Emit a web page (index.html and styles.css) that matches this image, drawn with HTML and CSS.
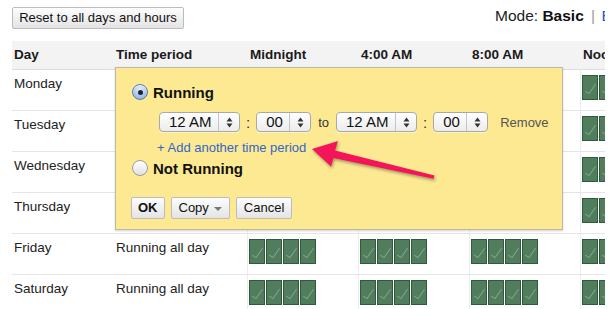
FILE: index.html
```html
<!DOCTYPE html>
<html>
<head>
<meta charset="utf-8">
<link rel="stylesheet" href="styles.css">
</head>
<body>
<div class="page">
  <div class="topbar">
    <button class="btn reset">Reset to all days and hours</button>
    <div class="mode">Mode: <b>Basic</b> <span class="sep">|</span> <a class="modelink">Bid adjustment</a></div>
  </div>

  <div class="sched">
    <div class="row head">
      <div class="c">Day</div><div class="c">Time period</div>
      <div class="c">Midnight</div><div class="c">4:00 AM</div><div class="c">8:00 AM</div><div class="c">Noon</div>
    </div>
    <div class="row">
      <div class="c">Monday</div><div class="c"></div>
      <div class="h"><i></i><i></i><i></i><i></i></div><div class="h"><i></i><i></i><i></i><i></i></div><div class="h"><i></i><i></i><i></i><i></i></div><div class="h"><i></i><i></i><i></i><i></i></div>
    </div>
    <div class="row">
      <div class="c">Tuesday</div><div class="c"></div>
      <div class="h"><i></i><i></i><i></i><i></i></div><div class="h"><i></i><i></i><i></i><i></i></div><div class="h"><i></i><i></i><i></i><i></i></div><div class="h"><i></i><i></i><i></i><i></i></div>
    </div>
    <div class="row">
      <div class="c">Wednesday</div><div class="c"></div>
      <div class="h"><i></i><i></i><i></i><i></i></div><div class="h"><i></i><i></i><i></i><i></i></div><div class="h"><i></i><i></i><i></i><i></i></div><div class="h"><i></i><i></i><i></i><i></i></div>
    </div>
    <div class="row">
      <div class="c">Thursday</div><div class="c"></div>
      <div class="h"><i></i><i></i><i></i><i></i></div><div class="h"><i></i><i></i><i></i><i></i></div><div class="h"><i></i><i></i><i></i><i></i></div><div class="h"><i></i><i></i><i></i><i></i></div>
    </div>
    <div class="row">
      <div class="c">Friday</div><div class="c">Running all day</div>
      <div class="h"><i></i><i></i><i></i><i></i></div><div class="h"><i></i><i></i><i></i><i></i></div><div class="h"><i></i><i></i><i></i><i></i></div><div class="h"><i></i><i></i><i></i><i></i></div>
    </div>
    <div class="row">
      <div class="c">Saturday</div><div class="c">Running all day</div>
      <div class="h"><i></i><i></i><i></i><i></i></div><div class="h"><i></i><i></i><i></i><i></i></div><div class="h"><i></i><i></i><i></i><i></i></div><div class="h"><i></i><i></i><i></i><i></i></div>
    </div>
  </div>

  <div class="popup">
    <div class="opt"><span class="radio on"></span><span class="optlabel">Running</span></div>
    <div class="times">
      <div class="sel sel-h"><span class="val">12 AM</span><span class="arr"><svg width="7" height="11" viewBox="0 0 7 11"><path d="M0.5 4.5 L3.5 0.5 L6.5 4.5 Z M0.5 6.5 L3.5 10.5 L6.5 6.5 Z" fill="#333"/></svg></span></div>
      <span class="colon">:</span>
      <div class="sel sel-m"><span class="val">00</span><span class="arr"><svg width="7" height="11" viewBox="0 0 7 11"><path d="M0.5 4.5 L3.5 0.5 L6.5 4.5 Z M0.5 6.5 L3.5 10.5 L6.5 6.5 Z" fill="#333"/></svg></span></div>
      <span class="to">to</span>
      <div class="sel sel-h"><span class="val">12 AM</span><span class="arr"><svg width="7" height="11" viewBox="0 0 7 11"><path d="M0.5 4.5 L3.5 0.5 L6.5 4.5 Z M0.5 6.5 L3.5 10.5 L6.5 6.5 Z" fill="#333"/></svg></span></div>
      <span class="colon">:</span>
      <div class="sel sel-m"><span class="val">00</span><span class="arr"><svg width="7" height="11" viewBox="0 0 7 11"><path d="M0.5 4.5 L3.5 0.5 L6.5 4.5 Z M0.5 6.5 L3.5 10.5 L6.5 6.5 Z" fill="#333"/></svg></span></div>
      <span class="remove">Remove</span>
    </div>
    <a class="addlink">+ Add another time period</a>
    <div class="opt opt2"><span class="radio"></span><span class="optlabel">Not Running</span></div>
    <div class="actions">
      <button class="btn pbtn ok">OK</button>
      <button class="btn pbtn">Copy <span class="tri"></span></button>
      <button class="btn pbtn">Cancel</button>
    </div>
  </div>

  <svg class="arrow" width="616" height="309" viewBox="0 0 616 309">
    <polygon points="312,149 338,141 335,150.5 434.5,175.5 433.5,178.8 333.5,158 331,166.5" fill="#f5145a"/>
  </svg>
</div>
</body>
</html>
```

FILE: styles.css
```css
html, body {
  margin: 0;
  padding: 0;
  overflow: hidden;
  background: #fff;
}
body {
  font-family: "Liberation Sans", Arial, Helvetica, sans-serif;
  font-size: 13px;
  color: #222;
}
.page {
  position: relative;
  width: 605px;
  height: 309px;
  overflow: hidden;
}
.topbar {
  display: flex;
  align-items: flex-start;
  padding: 7px 0 0 12px;
}
.btn {
  font-family: "Liberation Sans", Arial, Helvetica, sans-serif;
  font-size: 13px;
  color: #111;
  background: linear-gradient(#fdfdfd, #e4e4e4);
  border: 1px solid #bcbcbc;
  border-radius: 2px;
  height: 22px;
  line-height: 20px;
  padding: 0 6px;
  margin: 0;
  box-sizing: border-box;
  flex-shrink: 0;
}
.reset {
  width: 172px;
  padding: 0;
}
.mode {
  margin-left: 311px;
  font-size: 15.5px;
  line-height: 18px;
  white-space: nowrap;
  flex-shrink: 0;
  color: #222;
}
.mode b { color: #111; }
.sep { color: #999; margin: 0 2px 0 3px; }
.modelink { color: #2255cc; }

.sched {
  margin: 12px 0 0 12px;
  width: 679px;
}
.row {
  display: grid;
  grid-template-columns: 102px 133px 111px 111px 111px 111px;
  height: 40px;
  border-bottom: 1px solid #e5e5e5;
}
.row.head {
  height: 28px;
  background: #f3f3f3;
  border-bottom: 1px solid #dedede;
  font-weight: bold;
  font-size: 13.5px;
  color: #1a1a1a;
}
.row.head .c {
  display: flex;
  align-items: center;
  padding: 0 0 0 2px;
}
.row.head .c:nth-child(n+3) { padding-left: 3px; }
.c {
  padding: 6px 0 0 2px;
  line-height: 16px;
  font-size: 13.5px;
  white-space: nowrap;
}
.h {
  border-left: 1px solid #ececec;
  padding: 5px 0 0 1px;
  display: flex;
  align-items: flex-start;
}
.h i {
  position: relative;
  display: block;
  width: 16px;
  height: 25px;
  box-sizing: border-box;
  margin-right: 1px;
  background: #507e5c;
  border: 1px solid #2f5a3b;
}
.h i::after {
  content: "";
  position: absolute;
  left: 5px;
  top: 6px;
  width: 4px;
  height: 11px;
  border-right: 1px solid rgba(190, 215, 195, 0.45);
  border-bottom: 1px solid rgba(190, 215, 195, 0.45);
  transform: rotate(35deg);
}

.popup {
  position: absolute;
  left: 115px;
  top: 67px;
  width: 448px;
  height: 163px;
  box-sizing: border-box;
  background: #fde992;
  border: 1px solid #bdb9a6;
  box-shadow: 0 1px 2px rgba(0, 0, 0, 0.18);
  padding: 15px 0 0 15px;
}
.opt {
  display: flex;
  align-items: center;
  height: 18px;
  margin-left: 1px;
}
.opt2 { margin-top: 4px; }
.radio {
  position: relative;
  width: 16px;
  height: 16px;
  box-sizing: border-box;
  border-radius: 50%;
  border: 1px solid #9a9a9a;
  background: linear-gradient(#ffffff, #e2e2e2);
  box-shadow: inset 0 1px 1px rgba(255,255,255,0.8);
  flex-shrink: 0;
}
.radio.on {
  border-color: #5d7fa6;
  background: radial-gradient(circle at 50% 30%, #e6f0fc 0%, #b4cff3 45%, #7ea6dc 100%);
}
.radio.on::after {
  content: "";
  position: absolute;
  left: 4.5px;
  top: 4.5px;
  width: 5px;
  height: 5px;
  border-radius: 50%;
  background: #1c2430;
}
.optlabel {
  margin-left: 5px;
  font-size: 15px;
  font-weight: bold;
  color: #111;
}
.times {
  display: flex;
  align-items: center;
  margin: 11px 0 0 28px;
  height: 20px;
}
.sel {
  display: flex;
  height: 20px;
  box-sizing: border-box;
  border: 1px solid #a9a9a9;
  border-radius: 4px;
  background: linear-gradient(#ffffff, #ececec);
  box-shadow: 0 1px 0 rgba(255,255,255,0.5);
  font-size: 15px;
  line-height: 18px;
  color: #111;
}
.sel-h { width: 81px; }
.sel-m { width: 55px; }
.val {
  flex: 1;
  padding-left: 9px;
  white-space: nowrap;
}
.arr {
  width: 20px;
  border-left: 1px solid #c4c4c4;
  display: flex;
  align-items: center;
  justify-content: center;
}
.colon {
  font-size: 15px;
  color: #333;
  margin: 0 6px;
}
.to {
  margin: 0 7px;
  color: #333;
}
.remove {
  margin-left: 12px;
  color: #555;
}
.addlink {
  display: block;
  margin: 8px 0 0 26px;
  line-height: 15px;
  color: #3366cc;
}
.actions {
  display: flex;
  gap: 6px;
  margin-top: 20px;
}
.pbtn {
  padding: 0 7px;
  display: flex;
  align-items: center;
}
.pbtn.ok {
  font-weight: bold;
  padding: 0 6px;
}
.tri {
  display: inline-block;
  width: 0;
  height: 0;
  margin-left: 5px;
  margin-top: 2px;
  border-left: 4px solid transparent;
  border-right: 4px solid transparent;
  border-top: 4px solid #777;
}
.arrow {
  position: absolute;
  left: 0;
  top: 0;
  pointer-events: none;
  filter: drop-shadow(1px 2px 1.5px rgba(0, 0, 0, 0.35));
}
```
